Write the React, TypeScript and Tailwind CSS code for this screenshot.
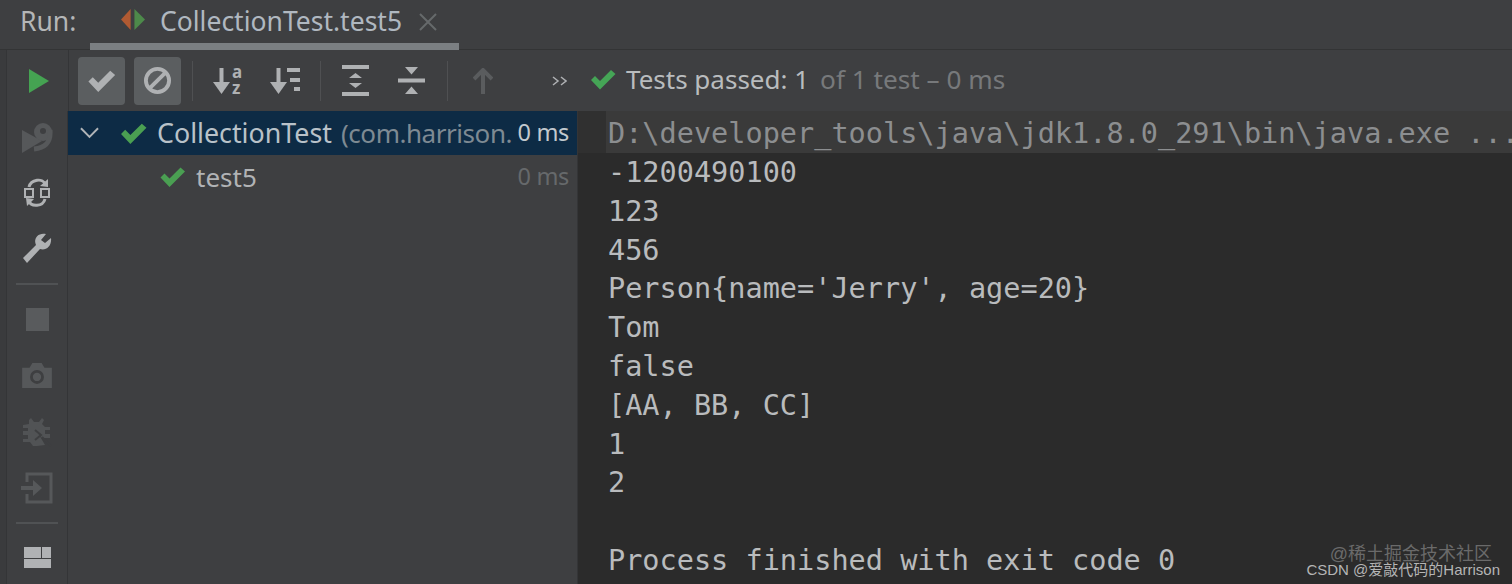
import { ReactNode } from "react"

const uiFont = "font-['Noto_Sans','Open_Sans',sans-serif]"

const Check = ({ className, fill = "#4a9f52" }: { className: string; fill?: string }) => (
	<svg viewBox="0 0 26 22" className={className}>
		<path d="M1 11.5 L5 7.5 L10 12.5 L21 1.5 L25.5 5.5 L10 21 Z" fill={fill} />
	</svg>
)

const SideIcon = ({ children, className = "" }: { children: ReactNode; className?: string }) => (
	<div className={`h-[56px] flex items-center justify-center ${className}`}>{children}</div>
)

const Divider = () => <div className="w-[1px] h-[40px] bg-[#4f5052]" />

const consoleLines = [
	"-1200490100",
	"123",
	"456",
	"Person{name='Jerry', age=20}",
	"Tom",
	"false",
	"[AA, BB, CC]",
	"1",
	"2",
	"\u00a0",
	"Process finished with exit code 0",
]

const App = () => {
	return (
		<div className={`w-[1512px] h-[584px] overflow-hidden relative bg-[#3e3f41] flex flex-col ${uiFont}`}>
			{/* Tabs */}
			<div className="h-[50px] shrink-0 flex border-b border-[#333435] pl-[20px] text-[26.5px] text-[#b4b6b7]">
				<span className="w-[70px] mt-[1px] leading-[40px]">Run:</span>
				<div className="w-[369px] h-[50px] border-b-[7px] border-[#7b7f82] flex items-start pl-[30px]">
					<svg viewBox="0 0 28 24" className="w-[27px] h-[23px] mt-[8px]">
						<path d="M11 1 L11 23 L1 12 Z" fill="#b05a32" />
						<path d="M15 1 L15 23 L26 12 Z" fill="#4d8a4a" />
					</svg>
					<span className="ml-[13px] mt-[1px] leading-[40px] text-[#b0b8c0]">CollectionTest.test5</span>
					<svg viewBox="0 0 18 18" className="w-[18px] h-[18px] ml-[17px] mt-[13px]">
						<path d="M1 1 L17 17 M17 1 L1 17" stroke="#66696b" strokeWidth="2" />
					</svg>
				</div>
			</div>

			<div className="flex flex-1 min-h-0">
				{/* Left strip */}
				<div className="w-[7px] shrink-0 bg-[#3a3b3d] border-r border-[#343537]" />

				<div className="flex-1 flex flex-col min-w-0">
					{/* Toolbar */}
					<div className="h-[61px] shrink-0 flex items-center">
						<div className="w-[61px] flex items-center justify-center">
							<svg viewBox="0 0 22 26" className="w-[22px] h-[26px] ml-[2px]">
								<path d="M1 1 L21 13 L1 25 Z" fill="#45a352" />
							</svg>
						</div>
						<div className="w-[1px] h-[61px] bg-[#343537]" />
						<div className="flex gap-[9px] ml-[9px]">
							<div className="w-[47px] h-[48px] rounded-[4px] bg-[#5b5e60] flex items-center justify-center">
								<Check className="w-[29px] h-[24px]" fill="#afb1b3" />
							</div>
							<div className="w-[47px] h-[48px] rounded-[4px] bg-[#5b5e60] flex items-center justify-center">
								<svg viewBox="0 0 30 30" className="w-[29px] h-[29px]">
									<circle cx="15" cy="15" r="12" fill="none" stroke="#afb1b3" strokeWidth="4" />
									<path d="M7 23 L23 7" stroke="#afb1b3" strokeWidth="4" />
								</svg>
							</div>
						</div>
						<div className="ml-[11px] mr-[20px]"><Divider /></div>
						{/* Sort */}
						<svg viewBox="0 0 30 28" className="w-[30px] h-[28px] overflow-visible">
							<path d="M8.5 1 V18" stroke="#afb1b3" strokeWidth="4" fill="none" />
							<path d="M0 15 H17 L8.5 27 Z" fill="#afb1b3" />
							<text x="19" y="11" fontSize="17" fontWeight="700" fill="#afb1b3">a</text>
							<text x="19" y="27" fontSize="17" fontWeight="700" fill="#afb1b3">z</text>
						</svg>
						<svg viewBox="0 0 30 28" className="w-[30px] h-[28px] ml-[27px]">
							<path d="M8.5 1 V18" stroke="#afb1b3" strokeWidth="4" fill="none" />
							<path d="M0 15 H17 L8.5 27 Z" fill="#afb1b3" />
							<path d="M17 1 H30 V5 H17 Z M20 11 H30 V15 H20 Z M24 20 H30 V24 H24 Z" fill="#afb1b3" />
						</svg>
						<div className="ml-[20px] mr-[21px]"><Divider /></div>
						{/* Expand / collapse */}
						<svg viewBox="0 0 27 31" className="w-[27px] h-[31px]">
							<path d="M0 0 H27 V4 H0 Z M0 27 H27 V31 H0 Z M13.5 8 L20 13 H7 Z M7 18 H20 L13.5 23 Z" fill="#afb1b3" />
						</svg>
						<svg viewBox="0 0 27 27" className="w-[27px] h-[27px] ml-[29px]">
							<path d="M0 11.5 H27 V15.5 H0 Z M7 0 H20 L13.5 7.5 Z M13.5 19.5 L20 27 H7 Z" fill="#afb1b3" />
						</svg>
						<div className="ml-[22px] mr-[25px]"><Divider /></div>
						<svg viewBox="0 0 20 26" className="w-[20px] h-[26px]">
							<path d="M10 26 V3 M1 11 L10 2 L19 11" stroke="#5a5c5e" strokeWidth="4" fill="none" />
						</svg>
						<svg viewBox="0 0 15 10" className="w-[15px] h-[10px] ml-[59px]">
							<path d="M1 1 L6 5 L1 9 M9 1 L14 5 L9 9" stroke="#afb1b3" strokeWidth="1.5" fill="none" />
						</svg>
						<Check className="w-[26px] h-[23px] ml-[23px] mb-[3px]" fill="#45a556" />
						<span className="ml-[10px] mb-[4px] text-[26px] text-[#b9bcbe] leading-[40px] whitespace-nowrap">Tests passed: 1</span>
						<span className="ml-[11px] mb-[4px] text-[26.2px] text-[#77797b] leading-[40px] whitespace-nowrap">of 1 test – 0 ms</span>
					</div>

					<div className="flex flex-1 min-h-0">
						{/* Side toolbar */}
						<div className="w-[61px] shrink-0 flex flex-col items-center border-r border-[#343537]">
							<SideIcon>
								<svg viewBox="0 0 34 34" className="w-[34px] h-[34px]">
									<path d="M2 9 L22 20 L2 32 Z" fill="#56585a" />
									<circle cx="23" cy="11" r="9" fill="#56585a" />
									<path d="M30 9 C31 22 25 27 14 28" stroke="#56585a" strokeWidth="5" fill="none" />
									<circle cx="23" cy="10" r="3" fill="#3e3f41" />
								</svg>
							</SideIcon>
							<SideIcon>
								<svg viewBox="0 0 26 33" className="w-[26px] h-[33px]">
									<path d="M5 11 C7 3 19 2 21 8 M21 23 C19 31 7 31 5 25" stroke="#afb1b3" strokeWidth="3" fill="none" />
									<path d="M16 10 L24 11 L24 3 Z M10 23 L2 22 L3 30 Z" fill="#afb1b3" />
									<path d="M1 13 H9 V21 H1 Z M17 13 H25 V21 H17 Z" fill="#3e3f41" stroke="#afb1b3" strokeWidth="2" />
								</svg>
							</SideIcon>
							<SideIcon>
								<svg viewBox="0 0 32 32" className="w-[32px] h-[32px]">
									<path d="M2 26 L6 31 L19 17 C25 19 31 14 30 6 L24 11 L20 8 L25 2 C17 0 12 7 15 13 Z" fill="#afb1b3" />
								</svg>
							</SideIcon>
							<div className="w-[42px] h-[2px] bg-[#505254] mt-[8px] mb-[7px]" />
							<SideIcon>
								<div className="w-[23px] h-[23px] bg-[#595b5d]" />
							</SideIcon>
							<SideIcon className="mt-[2px]">
								<svg viewBox="0 0 32 28" className="w-[32px] h-[26px]">
									<path d="M0 5 H8 L11 0 H21 L24 5 H32 V27 H0 Z" fill="#56585a" />
									<circle cx="16" cy="15" r="6" fill="none" stroke="#3e3f41" strokeWidth="3" />
								</svg>
							</SideIcon>
							<SideIcon className="mt-[2px]">
								<svg viewBox="0 0 32 32" className="w-[32px] h-[32px]">
									<path d="M10 2 L13 6 H18 L21 2 L23 4 L21 8 L24 11 H29 V14 H24 V18 H29 V22 H21 L17 17 L24 29 L16 30 H12 L9 26 H2 V23 H7 V19 H2 V15 H7 V12 H2 V9 L8 8 L8 4 Z" fill="#515355" />
									<path d="M14 14 L20 19 L14 24 M21 21 L30 30" stroke="#3e3f41" strokeWidth="2" fill="none" />
								</svg>
							</SideIcon>
							<SideIcon className="mt-[1px]">
								<svg viewBox="0 0 32 32" className="w-[32px] h-[32px]">
									<path d="M6 10 V2 H30 V30 H6 V22" stroke="#56585a" strokeWidth="3" fill="none" />
									<path d="M0 14 H12 V8 L21 16 L12 24 V18 H0 Z" fill="#56585a" />
								</svg>
							</SideIcon>
							<div className="w-[42px] h-[2px] bg-[#505254] my-[7px]" />
							<div className="h-[54px] flex items-center justify-center">
								<div className="w-[27px] flex flex-col gap-[1px]">
									<div className="flex gap-[1px]">
										<div className="h-[11px] flex-1 bg-[#b0b2b4]" />
										<div className="h-[11px] w-[9px] bg-[#b0b2b4]" />
									</div>
									<div className="h-[9px] bg-[#b0b2b4]" />
								</div>
							</div>
						</div>

						{/* Tree */}
						<div className="w-[510px] shrink-0 text-[26px] border-r border-[#343537]">
							<div className="h-[44px] bg-[#0d2b45] flex items-center pl-[12px] pr-[8px]">
								<svg viewBox="0 0 20 12" className="w-[19px] h-[12px]">
									<path d="M1 1 L10 10 L19 1" stroke="#b1b5b8" strokeWidth="2" fill="none" />
								</svg>
								<Check className="w-[27px] h-[23px] ml-[21px]" />
								<span className="ml-[10px] text-[26.8px] text-[#b9c2c9] whitespace-nowrap">CollectionTest</span>
								<span className="ml-[9px] tracking-[-0.45px] text-[#7e8a93] whitespace-nowrap flex-1">(com.harrison.</span>
								<span className="text-[#c2c9ce] text-[23.5px] tracking-[-0.35px] whitespace-nowrap">0 ms</span>
							</div>
							<div className="h-[44px] flex items-center pl-[91px] pr-[8px]">
								<Check className="w-[27px] h-[22px]" />
								<span className="ml-[10px] flex-1 text-[26px] text-[#b1b3b5]">test5</span>
								<span className="text-[#66696b] text-[23.5px] whitespace-nowrap tracking-[-0.35px]">0 ms</span>
							</div>
						</div>

						{/* Console */}
						<div className="flex-1 min-w-0 bg-[#2b2b2b] font-['DejaVu_Sans_Mono',monospace] text-[28.55px] leading-[38.8px] text-[#b9bbbd] whitespace-pre overflow-hidden">
							<div className="h-[42px] pl-[28px] flex bg-[#303030]">
								<div className="flex-1 bg-[#3a3a3a] text-[#8c8e90] pl-[2px] pt-[3px] overflow-hidden">D:\developer_tools\java\jdk1.8.0_291\bin\java.exe ...</div>
							</div>
							{consoleLines.map((line, i) => (
								<div key={i} className="pl-[30px] h-[38.8px]">
									{line}
								</div>
							))}
						</div>
					</div>
				</div>
			</div>

			{/* Watermark */}
			<div className="absolute right-[12px] bottom-[6px] text-right font-['Liberation_Sans','Noto_Sans_CJK_SC',sans-serif]">
				<div className="text-[18px] leading-[22px] text-[#6a6a6a] pr-[8px] -mb-[4px]">@稀土掘金技术社区</div>
				<div className="text-[15px] leading-[17px] text-[#b5b5b5]">CSDN @爱敲代码的Harrison</div>
			</div>
		</div>
	)
}

export default App
